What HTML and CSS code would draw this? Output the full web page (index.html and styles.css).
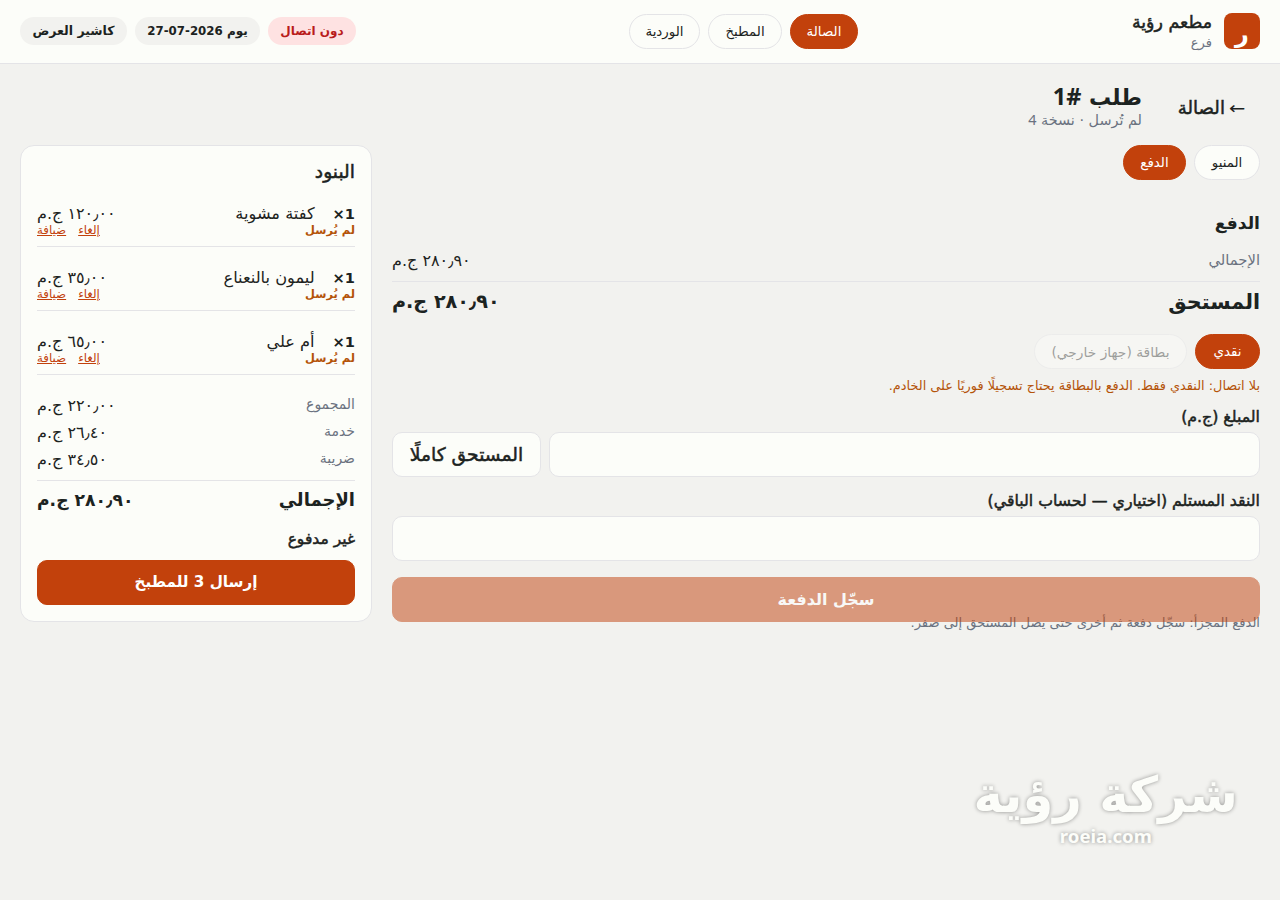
FILE: index.html
```html
<!DOCTYPE html>
<html lang="ar" dir="rtl"><head><meta charset="utf-8"><title>مطعم رؤية</title><link rel="stylesheet" href="styles.css"></head>
<body>
<header class="topbar">
<div class="brand"><span class="logo">ر</span><div><div class="name semi">مطعم رؤية</div><div class="branch">فرع</div></div></div>
<nav class="tabs"><a class="pill hall active">الصالة</a><a class="pill kitchen">المطبخ</a><a class="pill shift">الوردية</a></nav>
<div class="status"><span class="chip offline">دون اتصال</span><span class="chip day">يوم <span class="date">2026-07-27</span></span><span class="chip user">كاشير العرض</span></div>
</header>
<main>
<div class="heading"><a class="back semi"><span class="arrow">←</span> الصالة</a><div><h1>طلب <span class="latin">#1</span></h1><p class="muted">لم تُرسل · نسخة <span class="latin">4</span></p></div></div>
<div class="columns">
<section class="pay">
<div class="tabs"><a class="pill menu">المنيو</a><a class="pill checkout active">الدفع</a></div>
<h2>الدفع</h2>
<div class="row total"><span class="muted">الإجمالي</span><span>٢٨٠٫٩٠ ج.م</span></div>
<div class="row due"><span>المستحق</span><span class="due-value">٢٨٠٫٩٠ ج.م</span></div>
<div class="tabs methods"><a class="pill money active">نقدي</a><a class="pill disabled">بطاقة (جهاز خارجي)</a></div>
<p class="warn">بلا اتصال: النقدي فقط. الدفع بالبطاقة يحتاج تسجيلًا فوريًا على الخادم.</p>
<label class="label semi">المبلغ (ج.م)</label>
<div class="amount"><input class="field"><button class="btn full semi">المستحق كاملًا</button></div>
<label class="label cash semi">النقد المستلم (اختياري — لحساب الباقي)</label>
<input class="field">
<button class="btn primary submit">سجّل الدفعة</button>
<p class="note">الدفع المجزأ: سجّل دفعة ثم أخرى حتى يصل المستحق إلى صفر.</p>
</section>
<aside class="card">
<h3 class="semi">البنود</h3>
<div class="item"><div><div class="dish"><b>1×</b><span>كفتة مشوية</span></div><div class="unsent">لم يُرسل</div></div><div class="cost"><div>١٢٠٫٠٠ ج.م</div><div class="links"><a>إلغاء</a><a>ضيافة</a></div></div></div>
<div class="item"><div><div class="dish"><b>1×</b><span>ليمون بالنعناع</span></div><div class="unsent">لم يُرسل</div></div><div class="cost"><div>٣٥٫٠٠ ج.م</div><div class="links"><a>إلغاء</a><a>ضيافة</a></div></div></div>
<div class="item"><div><div class="dish"><b>1×</b><span>أم علي</span></div><div class="unsent">لم يُرسل</div></div><div class="cost"><div>٦٥٫٠٠ ج.م</div><div class="links"><a>إلغاء</a><a>ضيافة</a></div></div></div>
<div class="sums"><div class="row"><span class="muted">المجموع</span><span>٢٢٠٫٠٠ ج.م</span></div><div class="row"><span class="muted">خدمة</span><span>٢٦٫٤٠ ج.م</span></div><div class="row"><span class="muted">ضريبة</span><span>٣٤٫٥٠ ج.م</span></div></div>
<div class="row grand"><span>الإجمالي</span><span class="grand-value">٢٨٠٫٩٠ ج.م</span></div>
<div class="unpaid semi">غير مدفوع</div>
<button class="btn primary send">إرسال 3 للمطبخ</button>
</aside>
</div>
</main>
<div class="watermark"><div class="wm-name">شركة رؤية</div><div class="wm-url">roeia.com</div></div>
</body></html>
```

FILE: styles.css
```css
*{box-sizing:border-box}
body{margin:0;height:900px;background:#f2f2ef;color:#1c2321;font:16px/1.6 "DejaVu Sans",sans-serif;overflow:hidden}
h1,h2,h3,p{margin:0}
button,input{font:inherit;color:inherit}
.latin{font-family:"Noto Sans",sans-serif}
.semi{font-weight:400;-webkit-text-stroke:.5px currentColor}
.topbar{height:64px;background:#fcfdf9;border-bottom:1px solid #e4e4e7;padding:0 20px 1px;display:grid;grid-template-columns:402px 1fr auto;align-items:center}
.brand{display:flex;gap:12px;align-items:center}
.logo{width:36px;height:36px;border-radius:8px;background:#c2410c;color:#fff;font-weight:700;font-size:24px;line-height:36px;text-align:center;padding-top:3px}
.name{font-size:17.4px;line-height:20px;padding-top:3px}
.branch,.muted{color:#6b7280;font-size:13px}
.branch{line-height:22px}
.tabs{display:flex;gap:8px}
.pill{height:35px;border:1px solid #e4e4e7;border-radius:18px;background:#fcfdf9;font-size:13.4px;line-height:34px;text-align:center}
.hall{width:68px}.kitchen{width:74px}.shift{width:71px}.menu{width:66px}.checkout{width:63px}.money{width:65px}
.active{background:#c2410c;border-color:#c2410c;color:#fff}
.disabled{width:153px;font-size:13.8px;opacity:.4}
.status{display:flex;gap:8px}
.chip{height:28px;border-radius:14px;background:#f2f2ef;font-size:12px;font-weight:700;line-height:28px;text-align:center}
.date{font-size:11.8px}
.day{width:125px}.user{width:107px;font-size:12.5px}
.offline{width:88px;background:#fee2e2;color:#b91c1c}
main{padding:20px}
.heading{height:45px;display:flex;gap:16px;align-items:center;margin-bottom:16px}
.back{font-size:18.2px;padding:2px 16px 0;width:102px;white-space:nowrap}
.arrow{font-size:17px;-webkit-text-stroke:0;display:inline-block;transform:scaleX(1.15);margin-left:-1px}
h1{font-size:22px;line-height:26px;padding-top:1px}
h1 .latin{font-size:23.5px;line-height:20px}
.heading p{font-size:14.4px;line-height:18px}
.columns{display:grid;grid-template-columns:1fr 352px;gap:20px;align-items:start}
h2{font-size:17.2px;line-height:28px;margin-top:29px}
.row{display:flex;justify-content:space-between;align-items:center}
.row .muted{font-size:14px;padding-bottom:2px}
.total{height:44px;padding-top:3px}
.total .muted{font-size:14.8px}
.due{height:44px;border-top:1px solid #e4e4e7;font-size:20.7px;font-weight:700;padding-bottom:2px}
.due-value{font-size:19.2px}
.methods{margin-top:9px}
.warn{color:#b45309;font-size:12.86px;line-height:20px;margin-top:7px}
.label{display:block;font-size:15.75px;line-height:22px;margin:10px 0 4px}
.cash{margin-top:13px}
.amount{display:flex;gap:8px}
.field{width:100%;min-width:0;height:45px;border:1px solid #e4e4e7;border-radius:10px;background:#fcfdf9;display:block}
.btn{height:45px;border:1px solid #e4e4e7;border-radius:10px;background:#fcfdf9;white-space:nowrap;padding:0}
.full{flex:0 0 149px;font-size:18.7px}
.primary{width:100%;background:#c2410c;border-color:#c2410c;color:#fff;font-weight:700}
.submit{display:block;margin-top:16px;opacity:.5}
.send{font-size:15.2px}
.note{color:#6b7280;font-size:13.07px;line-height:13px;margin-top:-6px}
.card{height:477px;border:1px solid #e4e4e7;border-radius:14px;background:#fcfdf9;padding:16px}
h3{font-size:18.7px;line-height:20px}
.item{height:64px;display:flex;justify-content:space-between;border-bottom:1px solid #e4e4e7;padding-top:19px}
h3 + .item{height:65px;padding-top:20px}
.item .dish,.cost>div:first-child{height:24px;line-height:24px}
.dish{display:flex;gap:18px}
.dish b{font-size:14.6px}
.dish span{font-size:16.2px}
.unsent{color:#b45309;font-size:11.4px;font-weight:700;line-height:9px}
.links{display:flex;justify-content:flex-end;gap:12px;font-size:11.8px;line-height:9px;color:#c2410c;text-decoration:underline}
.sums{margin-top:17px;padding-bottom:7px}.sums .row{height:27px}
.grand{border-top:1px solid #e4e4e7;height:40px;font-size:18px;font-weight:700}
.grand-value{font-size:17.2px}
.unpaid{font-size:15.5px;line-height:39px;height:40px}
.watermark{position:absolute;right:42px;top:760px;text-align:center;color:#fcfdf9;font-weight:700;text-shadow:0 0 4px rgba(0,0,0,.4)}
.wm-name{font-size:49.7px;line-height:70px}
.wm-url{font:700 18.6px/12px "Noto Sans",sans-serif}
```
